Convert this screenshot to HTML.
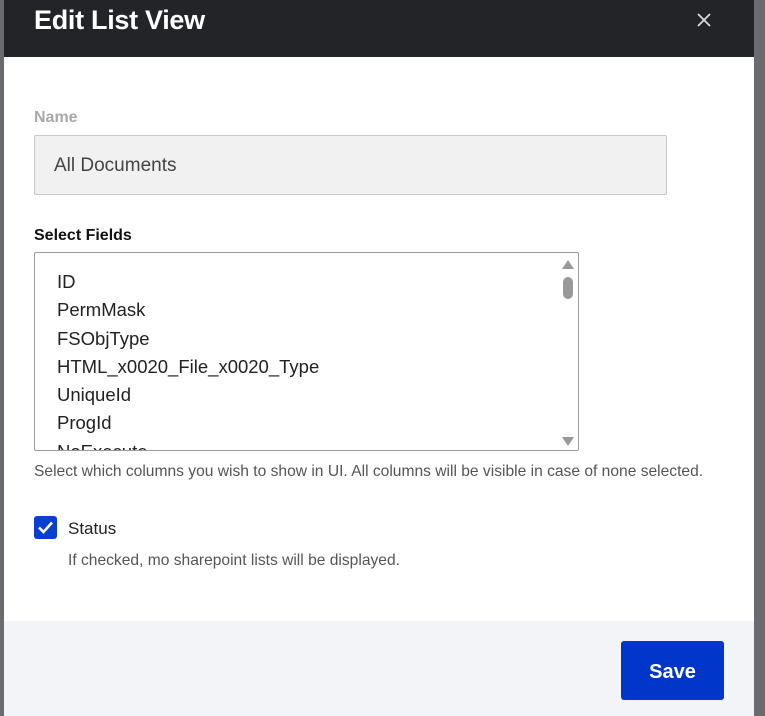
<!DOCTYPE html>
<html><head><style>
*{margin:0;padding:0;box-sizing:border-box}
body{width:765px;height:716px;overflow:hidden;background:#6b6b6f;font-family:"Liberation Sans",sans-serif;position:relative}
.m{position:absolute;left:4px;top:0;width:750px;height:716px;background:#fff}
.h{position:absolute;left:0;top:0;width:750px;height:57px;background:#232427}
.h h1{position:absolute;left:30px;top:5px;color:#fff;font-size:27px;font-weight:bold;letter-spacing:-0.3px}
.x{position:absolute;left:692px;top:12px}
.lab{position:absolute;left:30px;font-size:16px;font-weight:bold}
.in{position:absolute;left:30px;top:135px;width:633px;height:60px;background:#f1f1f1;border:1px solid #c8c8c8;border-radius:2px;padding:19px 0 0 19px;font-size:19px;color:#444}
.sel{position:absolute;left:30px;top:252px;width:545px;height:199px;border:1px solid #9a9a9a;border-radius:2px;overflow:hidden}
.sel div{position:absolute;left:22px;font-size:18.5px;color:#222}
.hint{position:absolute;font-size:15.6px;color:#555}
.cb{position:absolute;left:30px;top:516px;width:23px;height:23px;background:#0a3fd0;border-radius:3px}
.f{position:absolute;left:0;top:621px;width:750px;height:95px;background:#f3f4f7}
.btn{position:absolute;left:617px;top:641px;width:103px;height:59px;background:#0036c9;border-radius:3px;color:#fff;font-weight:bold;font-size:20px;text-align:center;line-height:62px}
</style></head><body>
<div class="m">
<div class="h"><h1>Edit List View</h1>
<svg class="x" width="16" height="16" viewBox="0 0 16 16"><path d="M2 2L14 14M14 2L2 14" stroke="#ddd" stroke-width="1.7"/></svg></div>
<div class="lab" style="top:109px;color:#a9a9a9">Name</div>
<div class="in">All Documents</div>
<div class="lab" style="top:227px;color:#111">Select Fields</div>
<div class="sel">
<div style="top:18px">ID</div>
<div style="top:46px">PermMask</div>
<div style="top:75px">FSObjType</div>
<div style="top:103px">HTML_x0020_File_x0020_Type</div>
<div style="top:131px">UniqueId</div>
<div style="top:159px">ProgId</div>
<div style="top:188px">NoExecute</div>
<svg style="position:absolute;left:526px;top:5px" width="14" height="190"><path d="M1 11L7 2L13 11Z" fill="#999"/><rect x="2" y="19" width="10" height="22" rx="5" fill="#999"/><path d="M1 179L7 188L13 179Z" fill="#999"/></svg>
</div>
<div class="hint" style="left:30px;top:463px">Select which columns you wish to show in UI. All columns will be visible in case of none selected.</div>
<div class="cb"><svg width="23" height="23"><path d="M5 11.5L9.5 16L18 6.5" stroke="#fff" stroke-width="2.6" fill="none"/></svg></div>
<div style="position:absolute;left:64px;top:519px;font-size:17px;color:#222">Status</div>
<div class="hint" style="left:64px;top:552px">If checked, mo sharepoint lists will be displayed.</div>
<div class="f"></div>
<div class="btn">Save</div>
</div>
</body></html>
